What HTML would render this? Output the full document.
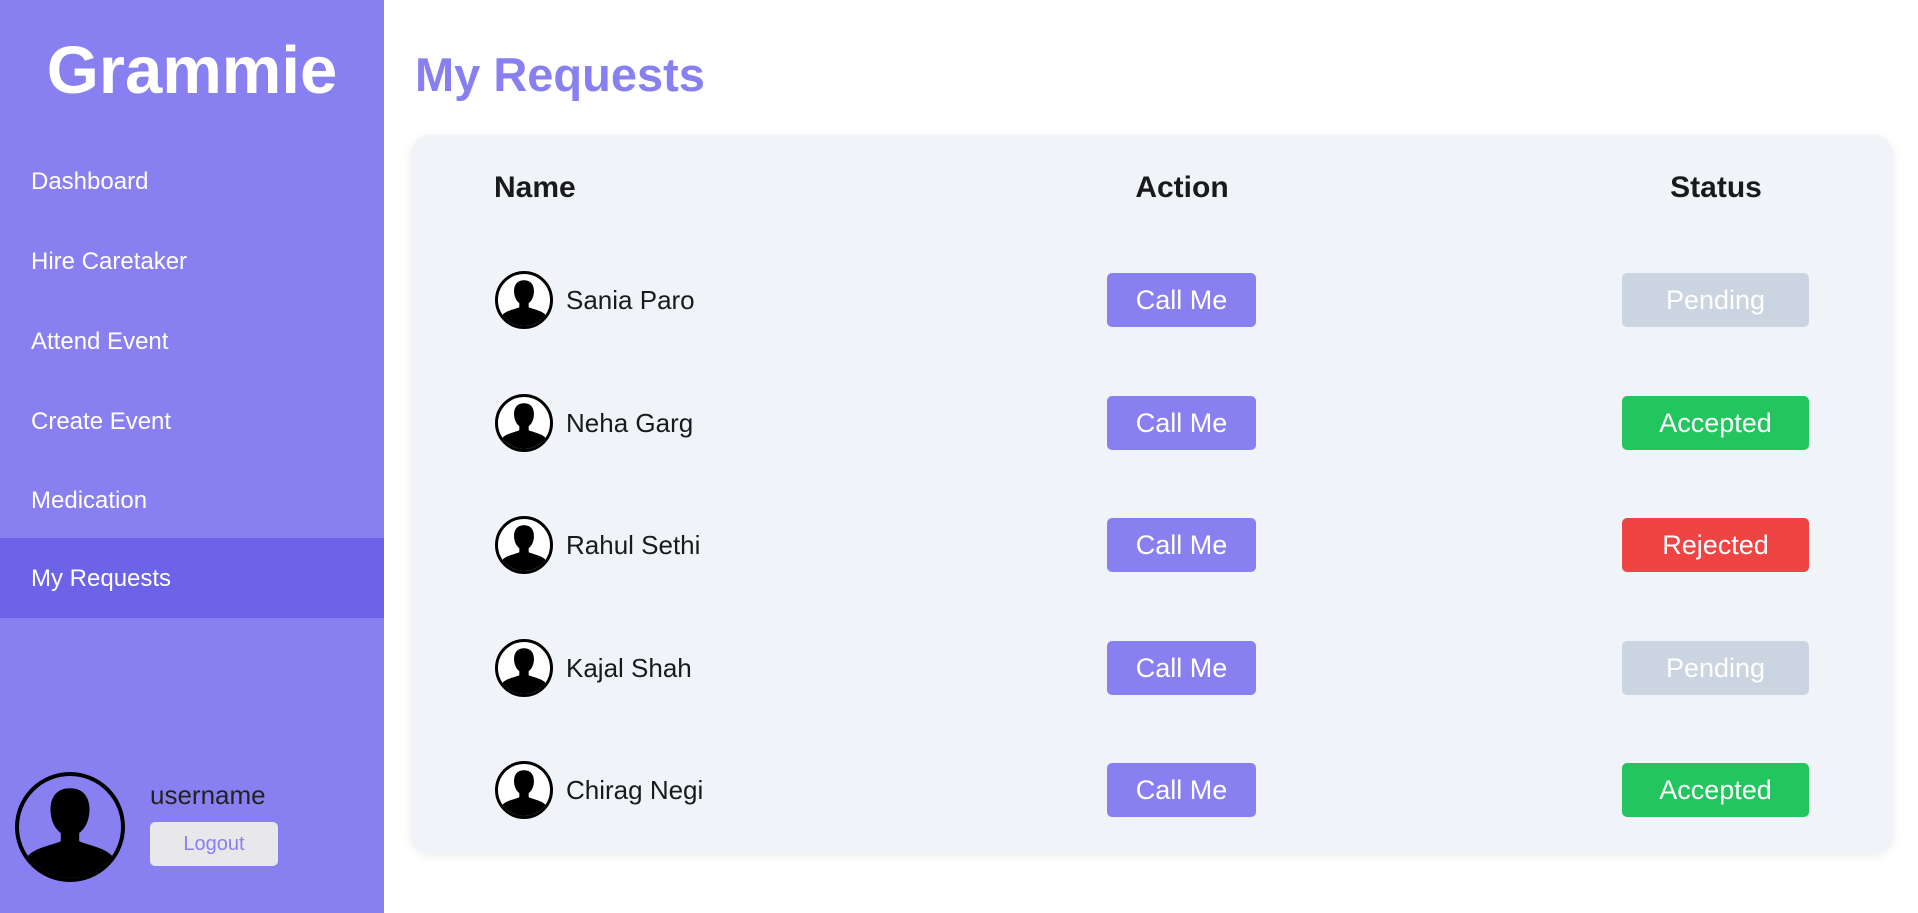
<!DOCTYPE html><html><head><style>
*{box-sizing:border-box;margin:0;padding:0}
body{width:1918px;height:913px;background:#fff;font-family:"Liberation Sans",sans-serif;position:relative;overflow:hidden}
.side{position:absolute;left:0;top:0;width:384px;height:913px;background:#8880f0}
.logo{position:absolute;top:32px;width:384px;text-align:center;color:#fff;font-weight:bold;font-size:67px}
.nav{position:absolute;left:0;width:384px;height:80px;line-height:82px;padding-left:31px;color:#fff;font-size:24px}
.nav.act{background:#6c63e8}
h1{position:absolute;left:415px;top:47px;font-size:47px;color:#8880f0}
.card{position:absolute;left:411px;top:135px;width:1482px;height:719px;background:#f0f3f8;border-radius:20px;box-shadow:0 2px 10px rgba(0,0,0,.08)}
.hd{position:absolute;top:171px;font-weight:bold;font-size:30px;color:#1a1a1a}
.av{position:absolute;border:3px solid #000;border-radius:50%;overflow:hidden;background:#fff}
.nm{position:absolute;left:566px;font-size:26px;color:#1a1a1a}
.btn{position:absolute;height:54px;line-height:54px;text-align:center;color:#fff;font-size:27px;border-radius:5px}
</style></head><body>
<div class="side">
<div class="logo">Grammie</div>
<div class="nav" style="top:141px">Dashboard</div>
<div class="nav" style="top:221px">Hire Caretaker</div>
<div class="nav" style="top:301px">Attend Event</div>
<div class="nav" style="top:381px">Create Event</div>
<div class="nav" style="top:460px">Medication</div>
<div class="nav act" style="top:538px">My Requests</div>
<div class="av" style="left:15px;top:772px;width:110px;height:110px;background:#8880f0;border-width:4px"><svg width="102" height="102" viewBox="0 0 100 100"><path d="M50 12c14 0 20 10 19 24-1 10-5 16-10 20v8c9 4 24 6 32 14v30H9V78c8-8 23-10 32-14v-8c-5-4-9-10-10-20-1-14 5-24 19-24z"/></svg></div>
<div style="position:absolute;left:150px;top:780px;font-size:26px;color:#222">username</div>
<div style="position:absolute;left:150px;top:822px;width:128px;height:44px;line-height:44px;background:#e8e8ea;border-radius:5px;text-align:center;color:#8880f0;font-size:20px">Logout</div>
</div>
<h1>My Requests</h1>
<div class="card"></div>
<div class="hd" style="left:494px">Name</div>
<div class="hd" style="left:1082px;width:200px;text-align:center">Action</div>
<div class="hd" style="left:1616px;width:200px;text-align:center">Status</div>
<div id="rows"></div>
<script>
var r=[["Sania Paro","Pending","#cbd5e1"],["Neha Garg","Accepted","#22c55e"],["Rahul Sethi","Rejected","#ef4444"],["Kajal Shah","Pending","#cbd5e1"],["Chirag Negi","Accepted","#22c55e"]];
var h="";r.forEach(function(x,i){var c=300+i*122.5;
h+='<div class="av" style="left:495px;top:'+(c-29)+'px;width:58px;height:58px"><svg width="52" height="52" viewBox="0 0 100 100"><path d="M50 12c14 0 20 10 19 24-1 10-5 16-10 20v8c9 4 24 6 32 14v30H9V78c8-8 23-10 32-14v-8c-5-4-9-10-10-20-1-14 5-24 19-24z"/></svg></div>';
h+='<div class="nm" style="top:'+(c-15)+'px">'+x[0]+'</div>';
h+='<div class="btn" style="left:1107px;width:149px;top:'+(c-27)+'px;background:#8880f0">Call Me</div>';
h+='<div class="btn" style="left:1622px;width:187px;top:'+(c-27)+'px;background:'+x[2]+'">'+x[1]+'</div>';});
document.getElementById("rows").innerHTML=h;
</script>
</body></html>
